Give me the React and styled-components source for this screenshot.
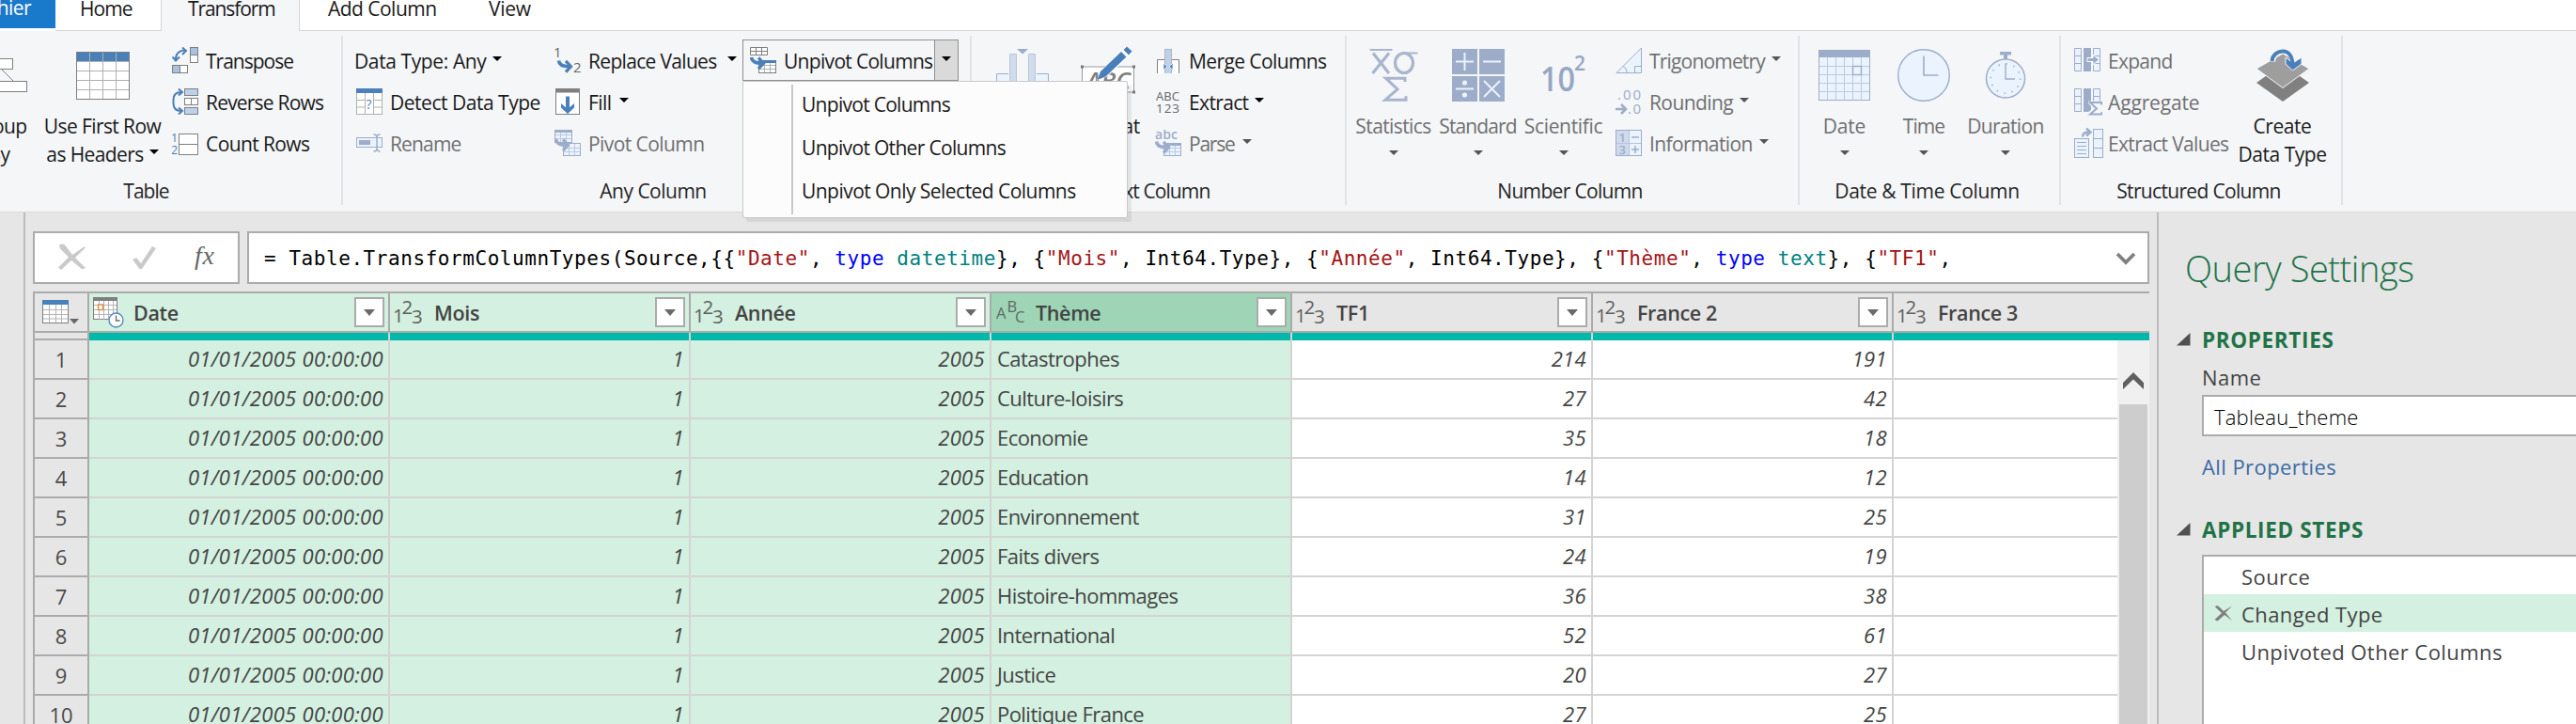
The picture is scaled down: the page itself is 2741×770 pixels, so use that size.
import React from "react";
import styled, { createGlobalStyle, css } from "styled-components";

const BLUE = "#4a80ba";
const MUTED = "#9dadc9";
const PALE = "#eaf3fe";
const GRAY = "#7f7f7f";
const RIBBON = "#f4f6f8";

const GlobalStyle = createGlobalStyle`
  * { box-sizing: border-box; }
  html, body { margin: 0; height: 100%; overflow: hidden; }
  body {
    background: #e6e6e6;
    color: #1a1a1a;
    font-family: "Open Sans", "Noto Sans", sans-serif;
    font-size: 21px;
  }
  svg { display: block; flex: none; }
`;

const Window = styled.div`
  width: 2741px;
  height: 770px;
  display: flex;
  flex-direction: column;
  overflow: hidden;
`;

/* ---------- tab strip ---------- */

const TabStrip = styled.div`
  flex: none;
  height: 33px;
  display: flex;
  align-items: flex-start;
  background: #fff;
  line-height: 19px;
  white-space: nowrap;
`;

const FileTab = styled.div`
  width: 59px;
  height: 30px;
  display: flex;
  justify-content: flex-end;
  padding-right: 26px;
  background: #1979ca;
  color: #fff;
  line-height: 16px;
  letter-spacing: -0.6px;
`;

const Tab = styled.div`
  width: ${(p) => p.$w}px;
  height: 33px;
  padding-left: ${(p) => p.$pad}px;
  letter-spacing: ${(p) => p.$ls}px;
  border-bottom: 1px solid #d3d5d8;
  ${(p) =>
    p.$active &&
    css`
      background: ${RIBBON};
      border: solid #d3d5d8;
      border-width: 0 1px;
    `}
`;

const TabRest = styled.div`
  flex: 1;
  height: 33px;
  border-bottom: 1px solid #d3d5d8;
`;

/* ---------- ribbon ---------- */

const Ribbon = styled.div`
  flex: none;
  height: 193px;
  display: flex;
  padding-top: 5px;
  background: ${RIBBON};
  border-bottom: 1px solid #d9dadc;
  white-space: nowrap;
`;

const Group = styled.section`
  flex: none;
  width: ${(p) => p.$w}px;
  height: 180px;
  padding-top: 5px;
  border-right: 2px solid #e1e3e6;
  display: flex;
  flex-direction: column;
`;

const GroupBody = styled.div`
  display: flex;
  height: 147px;
`;

const Caption = styled.div`
  padding-right: ${(p) => p.$shift ?? 5}px;
  text-align: center;
  line-height: 30px;
  letter-spacing: ${(p) => p.$ls ?? -0.6}px;
  color: #262626;
`;

const CommandColumn = styled.div`
  flex: none;
  width: ${(p) => (p.$w ? p.$w + "px" : "auto")};
  margin-left: ${(p) => p.$ml || 0}px;
`;

const CommandRow = styled.div`
  height: 44px;
  display: flex;
  align-items: center;
  margin-left: ${(p) => (p.$bare ? -2 : 0)}px;
  color: ${(p) => (p.$off ? "#707070" : "#1a1a1a")};
  letter-spacing: ${(p) => p.$ls ?? -0.6}px;
`;

const IconSlot = styled.span`
  flex: none;
  width: 36px;
  padding-bottom: 2px;
`;

const Arrow = styled.span`
  flex: none;
  width: 0;
  height: 0;
  margin-left: ${(p) => p.$gap ?? 7}px;
  margin-bottom: ${(p) => p.$up ?? 5}px;
  border: solid transparent;
  border-width: 5.5px 5.5px 0;
  border-top-color: ${(p) => (p.$off ? "#555" : "#000")};
`;

const BigButton = styled.div`
  flex: none;
  width: ${(p) => p.$w}px;
  margin-left: ${(p) => p.$ml || 0}px;
  display: flex;
  flex-direction: column;
  align-items: center;
  color: ${(p) => (p.$off ? "#707070" : "#1a1a1a")};
  letter-spacing: ${(p) => p.$ls ?? -0.6}px;
`;

const BigIcon = styled.div`
  height: 76px;
  padding-bottom: 2px;
  display: flex;
  align-items: center;
`;

const BigLine = styled.div`
  height: 30px;
  display: flex;
  align-items: center;
`;

const SplitButtonAnchor = styled.div`
  position: relative;
  width: 230px;
  margin-top: -1px;
`;

const SplitButton = styled.div`
  height: 44px;
  display: flex;
  border: 1px solid #8f8f8f;
  letter-spacing: -0.69px;
`;

const SplitMain = styled.div`
  flex: 1;
  display: flex;
  align-items: center;
  padding: 2px 0 0 7px;
`;

const SplitToggle = styled.div`
  width: 25px;
  display: flex;
  align-items: center;
  justify-content: center;
  background: #dadada;
  border-left: 1px solid #8f8f8f;
`;

const Menu = styled.div`
  position: absolute;
  z-index: 2;
  top: 44px;
  left: 0;
  width: 410px;
  height: 146px;
  padding-left: 51px;
  background: #fcfcfc;
  border: 1px solid #c8c8c8;
  border-radius: 2px;
  box-shadow: 4px 4px 1px rgba(0, 0, 0, 0.07);
`;

const MenuList = styled.div`
  height: 138px;
  margin-top: 3px;
  padding-left: 9px;
  border-left: 2px solid #c9c9c9;
`;

const MenuItem = styled.div`
  height: 46px;
  line-height: 43px;
  letter-spacing: ${(p) => p.$ls}px;
`;

/* ---------- workspace ---------- */

const Workspace = styled.div`
  flex: 1;
  min-height: 0;
  display: flex;
`;

const QueriesRail = styled.div`
  flex: none;
  width: 27px;
  border-right: 2px solid #bcbcbc;
`;

const Main = styled.main`
  flex: none;
  width: 2268px;
  padding: 20px 8px 0;
  display: flex;
  flex-direction: column;
`;

const FormulaBar = styled.div`
  flex: none;
  height: 56px;
  display: flex;
  gap: 8px;
`;

const FormulaTools = styled.div`
  flex: none;
  width: 220px;
  border: 2px solid #ababab;
  background: #fff;
`;

const FormulaInput = styled.div`
  flex: 1;
  display: flex;
  align-items: center;
  justify-content: space-between;
  padding: 1px 12px 0 16px;
  border: 2px solid #ababab;
  background: #fff;
`;

const Code = styled.code`
  font-family: "DejaVu Sans Mono", monospace;
  font-size: 21px;
  letter-spacing: 0.56px;
  white-space: pre;
  color: #000;
`;

const Token = styled.span`
  color: ${(p) => ({ str: "#a31515", kw: "#0000ff", type: "#008080" })[p.$kind]};
`;

const Grid = styled.div`
  flex: 1;
  min-height: 0;
  margin-top: 8px;
  border-top: 2px solid #ababab;
  display: flex;
  flex-direction: column;
  color: #444;
`;

const HeaderRow = styled.div`
  flex: none;
  height: 42px;
  display: flex;
  overflow: hidden;
  border-bottom: 2px solid #ababab;
`;

const CornerCell = styled.div`
  flex: none;
  width: 60px;
  height: ${(p) => p.$h}px;
  display: flex;
  align-items: center;
  justify-content: center;
  border: solid #ababab;
  border-width: 0 2px ${(p) => (p.$line ? 2 : 0)}px;
  font-size: 22px;
  color: #4a4a4a;
`;

const HeaderCell = styled.div`
  flex: none;
  width: 320px;
  height: 40px;
  display: flex;
  align-items: center;
  padding: 0 4px;
  border-right: 2px solid #ababab;
  background: ${(p) => ({ sel: "#d3f0e0", cur: "#9ed5b7" })[p.$tone] || "#e6e6e6"};
  font-size: 21.5px;
  font-weight: 600;
  letter-spacing: -0.35px;
`;

const HeaderIcon = styled.span`
  flex: none;
  width: 43px;
`;

const FilterButton = styled.span`
  flex: none;
  width: 32px;
  height: 32px;
  margin-left: auto;
  display: flex;
  align-items: center;
  justify-content: center;
  background: #fff;
  border: 2px solid #ababab;
`;

const FilterArrow = styled.span`
  border: solid transparent;
  border-width: 7px 6px 0;
  border-top-color: #6a6a6a;
`;

const QualityRow = styled.div`
  flex: none;
  height: 8px;
  display: flex;
  overflow: hidden;
`;

const QualityCell = styled.div`
  flex: none;
  width: 320px;
  background: #01b8aa;
  border-right: 2px solid #d4d4d4;
`;

const GridBody = styled.div`
  flex: 1;
  min-height: 0;
  display: flex;
`;

const Rows = styled.div`
  flex: 1;
  overflow: hidden;
`;

const Row = styled.div`
  display: flex;
  height: 42px;
`;

const Cell = styled.div`
  flex: none;
  width: 320px;
  padding: 0 5px 0 6px;
  border: solid #d4d4d4;
  border-width: 0 2px 2px 0;
  background: ${(p) => (p.$sel ? "#d3f0e0" : "#fff")};
  font-size: 22px;
  line-height: 39px;
  white-space: nowrap;
  ${(p) =>
    p.$num
      ? css`
          text-align: right;
          font-style: italic;
          letter-spacing: 0.33px;
        `
      : css`
          letter-spacing: -0.55px;
        `}
`;

const ScrollBar = styled.div`
  flex: none;
  width: 34px;
  display: flex;
  flex-direction: column;
  align-items: center;
  background: #f0f0f0;
`;

const ScrollUp = styled.div`
  height: 68px;
  padding-top: 33px;
`;

const ScrollThumb = styled.div`
  flex: 1;
  width: 30px;
  background: #cdcdcd;
`;

/* ---------- settings pane ---------- */

const Pane = styled.aside`
  flex: 1;
  min-width: 0;
  overflow: hidden;
  border-left: 2px solid #bcbcbc;
  padding-left: 19px;
  font-size: 22px;
  letter-spacing: 0.42px;
  color: #444;
  white-space: nowrap;
`;

const PaneTitle = styled.h1`
  margin: 0 0 0 9px;
  padding-top: 31px;
  font-size: 38px;
  font-weight: 300;
  line-height: 56px;
  letter-spacing: -0.46px;
  color: #217346;
`;

const SectionHead = styled.h2`
  margin: ${(p) => p.$mt}px 0 0;
  height: 30px;
  display: flex;
  align-items: center;
  gap: 11px;
  font-size: 22.5px;
  font-weight: 700;
  letter-spacing: 0.65px;
  color: #217346;
`;

const Field = styled.div`
  margin-left: 27px;
  display: flex;
  flex-direction: column;
`;

const FieldLabel = styled.label`
  margin-top: 8px;
  line-height: 34px;
`;

const NameInput = styled.div`
  width: 420px;
  height: 44px;
  margin-top: 2px;
  padding-left: 11px;
  border: 2px solid #ababab;
  background: #fff;
  color: #000;
  font-weight: 300;
  letter-spacing: 0.2px;
  line-height: 42px;
`;

const Link = styled.a`
  margin-top: 16px;
  line-height: 32px;
  color: #3b6aa5;
`;

const StepList = styled.div`
  width: 420px;
  height: 240px;
  margin: 12px 0 0 27px;
  border: 2px solid #ababab;
  background: #fff;
`;

const Step = styled.div`
  height: 40px;
  display: flex;
  align-items: center;
  padding-top: 2px;
  background: ${(p) => (p.$sel ? "#d3f0e0" : "transparent")};
`;

const StepIcon = styled.span`
  flex: none;
  width: 40px;
  padding: 0 0 2px 11px;
`;

/* ---------- small icons (28 x 28) ---------- */

const Icon = ({ children, w = 28, h = 28 }) => (
  <svg width={w} height={h} viewBox={`0 0 ${w} ${h}`} fill="none">
    {children}
  </svg>
);

const Curl = ({ x, y, c }) => (
  <g transform={`translate(${x} ${y})`} stroke={c}>
    <path d="M0 .5c.5 4.500 4 6.300 11 6.200" strokeWidth="3.600" />
    <path d="M7.500 .8l5.500 5.900-5.500 5.900" strokeWidth="3.200" />
  </g>
);

const MiniTable = ({ x, y, c, head, fill = "#fff", line = c }) => (
  <g transform={`translate(${x} ${y})`}>
    <rect x=".5" y=".5" width="18" height="13" fill={fill} stroke={c} />
    <path d="M6.500 1v12M12.500 1v12M1 5.500h17M1 9.500h17" stroke={line} />
    {head && <rect width="19" height="3" fill={head} />}
  </g>
);

const TransposeIcon = () => (
  <Icon>
    <rect x="19.500" y=".5" width="8" height="16" fill="#fff" stroke={GRAY} />
    <path d="M20 1h7v7h-7z" fill="#a9c1de" />
    <path d="M20 8.500h7" stroke={GRAY} />
    <rect x=".5" y="19.500" width="16" height="8" fill="#fff" stroke={GRAY} />
    <path d="M1 20h7v7H1z" fill="#a9c1de" />
    <path d="M8.500 20v7" stroke={GRAY} />
    <path d="M4 13C4 7 8 3.500 14 3.500" stroke={BLUE} strokeWidth="2" />
    <path d="M11 .5l4 3.500-4 4M.5 10.500l3.500 4 4-4" stroke={BLUE} strokeWidth="2" />
  </Icon>
);

const ReverseIcon = () => (
  <Icon>
    <rect x="13.500" y=".5" width="14" height="7" fill="#bed1ea" stroke={GRAY} />
    <rect x="13.500" y="10.500" width="14" height="7" fill="#fff" stroke={GRAY} />
    <path d="M20.500 11v6" stroke={GRAY} />
    <rect x="13.500" y="20.500" width="14" height="7" fill="#bed1ea" stroke={GRAY} />
    <path d="M10 4C4 4 1.500 7 1.500 12v4c0 5 2.500 8 8.500 8" stroke={BLUE} strokeWidth="2" />
    <path d="M7 .5l4 3.500-4 3.500M7 20.500l4 3.500-4 3.500" stroke={BLUE} strokeWidth="2" />
  </Icon>
);

const CountIcon = () => (
  <Icon>
    <rect x="7.500" y="4.500" width="20" height="22" fill="#fff" stroke={GRAY} />
    <path d="M8 15.500h19" stroke={GRAY} />
    <text x="-1" y="13" fontSize="12.500" fill={BLUE} letterSpacing="0">1</text>
    <text x="-1" y="26" fontSize="12.500" fill={BLUE} letterSpacing="0">2</text>
  </Icon>
);

const DetectIcon = () => (
  <Icon>
    <rect x=".5" y=".5" width="27" height="27" fill="#fff" stroke="#b0b0b0" />
    <path d="M9.500 5v22M18.500 5v22M1 12.500h8M1 20h8M19 12.500h8M19 20h8" stroke="#b0b0b0" />
    <path d="M0 0h28v5H0z" fill={BLUE} />
    <text x="10.500" y="22" fontSize="14" fill={BLUE} letterSpacing="0">?</text>
  </Icon>
);

const RenameIcon = () => (
  <Icon w={28} h={20}>
    <rect x=".5" y="4.500" width="27" height="10" fill={PALE} stroke={MUTED} />
    <path d="M3 7h12v5H3z" fill={MUTED} />
    <path d="M18.500 1c3 0 3.500 1.500 3.500 3v12c0 1.500-.5 3-3.500 3M25.500 1c-3 0-3.500 1.500-3.500 3v12c0 1.500.5 3 3.500 3" stroke={MUTED} strokeWidth="1.500" />
  </Icon>
);

const ReplaceIcon = () => (
  <Icon w={31}>
    <text x="-1" y="11" fontSize="15" fill="#666" letterSpacing="0">1</text>
    <Curl x={4.500} y={14} c={BLUE} />
    <text x="20" y="26.500" fontSize="15" fill="#666" letterSpacing="0">2</text>
  </Icon>
);

const FillIcon = () => (
  <Icon h={30}>
    <rect x="1.500" y="1.500" width="25" height="27" fill="#fff" stroke={GRAY} />
    <path d="M1 1h26v4.500H1z" fill={GRAY} />
    <path d="M14 9.500V25" stroke={BLUE} strokeWidth="4" />
    <path d="M7 17v4.500L14 28l7-6.500V17l-7 6z" fill={BLUE} />
  </Icon>
);

const PivotIcon = () => (
  <Icon>
    <MiniTable x={0} y={0} c={MUTED} head={MUTED} fill={PALE} line="#bccadf" />
    <MiniTable x={9} y={14} c={MUTED} fill={PALE} line="#bccadf" />
    <Curl x={1.500} y={9.500} c={MUTED} />
  </Icon>
);

const UnpivotIcon = () => (
  <Icon>
    <path d="M.5.500h18v8H.5zM6.500 1v7M12.500 1v7M1 4.500h17" fill="#fff" stroke={GRAY} />
    <MiniTable x={9} y={14} c={GRAY} head={BLUE} line="#b0b0b0" />
    <Curl x={1.500} y={10.500} c={BLUE} />
  </Icon>
);

const MergeIcon = () => (
  <Icon>
    <path d="M2.500 28V13.500h23V28" fill="#fff" stroke={GRAY} />
    <rect x="10.500" y="2.500" width="7" height="26" fill="#bed1ea" stroke="#a9b5c6" />
    <path d="M9 17l4 3.800-4 3.800zM19 17l-4 3.800 4 3.800z" fill={BLUE} stroke="#fff" strokeWidth=".8" />
  </Icon>
);

const ExtractIcon = () => (
  <Icon>
    <text x="1" y="13" fontSize="13" textLength="25" fill="#666" letterSpacing="0">ABC</text>
    <text x="1" y="26" fontSize="13.500" textLength="25" fill="#666" letterSpacing="0">123</text>
  </Icon>
);

const ParseIcon = () => (
  <Icon w={29}>
    <text x="0" y="10" fontSize="14" textLength="24" fontWeight="600" fill={MUTED} letterSpacing="0">abc</text>
    <MiniTable x={9} y={14} c={MUTED} head={MUTED} fill={PALE} line="#bccadf" />
    <Curl x={1.500} y={12} c={MUTED} />
  </Icon>
);

const TrigIcon = () => (
  <Icon>
    <path d="M1 27.500L27.500 1v26.500z" fill={PALE} stroke={MUTED} />
    <path d="M20.500 27v-6.500H27M8 20.500c3 1.500 4 4 4 6.500" stroke={MUTED} />
  </Icon>
);

const RoundIcon = () => (
  <Icon>
    <text x="2" y="12" fontSize="15" textLength="25" fill={MUTED} letterSpacing="0">.00</text>
    <text x="13" y="27" fontSize="15" textLength="14" fill={MUTED} letterSpacing="0">.0</text>
    <path d="M0 22h10M6 17l5 5-5 5" stroke={MUTED} strokeWidth="2.600" />
  </Icon>
);

const InfoIcon = () => (
  <Icon>
    <rect x=".5" y=".5" width="27" height="27" fill={PALE} stroke={MUTED} />
    <path d="M1 1h13v26H1z" fill="#cfdbed" />
    <path d="M14.500 1v26M1 14.500h26" stroke="#b6c5dc" />
    <text x="3.500" y="12.500" fontSize="13" fill={MUTED} fontWeight="600" letterSpacing="0">1</text>
    <text x="3.500" y="26" fontSize="13" fill={MUTED} fontWeight="600" letterSpacing="0">3</text>
    <path d="M17 8h8M17 21h8M21 17v8" stroke={MUTED} strokeWidth="1.500" />
  </Icon>
);

const Columns = ({ children }) => (
  <>
    <path d="M.5.5h7v24h-7zM20.500.5h7v24h-7z" fill={PALE} stroke={MUTED} />
    <path d="M1 8.500h6M1 16.500h6M21 8.500h6M21 16.500h6" stroke={MUTED} />
    <path d="M10 0h8v25h-8z" fill={MUTED} />
    {children}
  </>
);

const ExpandIcon = () => (
  <Icon h={26}>
    <Columns>
      <path d="M14 10.500h6V7l6.500 5.500L20 18v-3.500h-6z" fill={MUTED} stroke="#fff" />
    </Columns>
  </Icon>
);

const AggregateIcon = () => (
  <Icon w={30} h={29}>
    <Columns>
      <path d="M15 13.500h15v15H14.500v-3l6-4.500-5.500-5z" fill={RIBBON} />
      <path d="M29 17.500v-2.500H17l7 6.500-7 6h12.500v-2.500" stroke={MUTED} strokeWidth="2" />
    </Columns>
  </Icon>
);

const ExtractValuesIcon = () => (
  <Icon w={32} h={32}>
    <g transform="translate(-1 0)">
      <rect x="1.500" y="11.500" width="15" height="20" fill={PALE} stroke={MUTED} />
      <path d="M4 15.500h10M4 19.500h10M4 23.500h10M4 27.500h10" stroke={MUTED} />
      <rect x="21.500" y="1.500" width="10" height="30" fill={PALE} stroke={MUTED} />
      <path d="M22 11.500h9M22 21.500h9" stroke={MUTED} />
      <path d="M10 9.500c0-3.500 2-5 7-5M14 .5l4.500 4-4.500 4" stroke={MUTED} strokeWidth="2.400" />
    </g>
  </Icon>
);

/* ---------- large icons ---------- */

const GroupByIcon = () => (
  <Icon w={60} h={56}>
    <path d="M33 22l12 12M26 22L14 34" stroke={GRAY} />
    <rect x="14.500" y="10.500" width="30" height="11" fill="#fff" stroke={GRAY} />
    <rect x=".5" y="34.500" width="59" height="11" fill="#fff" stroke={GRAY} />
  </Icon>
);

const TableIcon = () => (
  <Icon w={57} h={51}>
    <rect x=".5" y=".5" width="56" height="50" fill="#fff" stroke={GRAY} />
    <path d="M1 1h55v10H1z" fill={BLUE} />
    <path d="M14.500 1v49M28.500 1v49M42.500 1v49M1 10.500h55M1 20.500h55M1 30.500h55M1 40.500h55" stroke="#b0b0b0" />
  </Icon>
);

const SplitIcon = () => (
  <Icon w={56} h={56}>
    <path d="M.5 26.500h55V56H.5z" fill={PALE} stroke={MUTED} />
    <path d="M13 5h30v51H13z" fill={RIBBON} />
    <path d="M14.500 56V5.500h7V56M34.500 56V5.500h7V56" fill="#d0dcec" stroke="#b9c7dd" />
    <path d="M22 0h12l-6 5.500z" fill={MUTED} />
  </Icon>
);

const FormatIcon = () => (
  <Icon w={58} h={62}>
    <g transform="translate(0 -.5)">
      <rect x="1.500" y="22.500" width="55" height="27" fill="#fff" stroke="#999" />
      <path d="M0 21h3v3H0zM55 21h3v3h-3zM55 48h3v3h-3z" fill="#777" />
      <text x="6" y="46" fontSize="26" fontStyle="italic" fontWeight="600" fill={GRAY} letterSpacing="0">ABC</text>
      <path d="M17 37l4-10L47 1l8 7-27 25z" fill="#fff" />
      <path d="M17.500 36.500l3.500-9 22-21 5.500 5.500-22 21z" fill={BLUE} />
      <path d="M45.500 4.500L49 1l5.500 5-3.500 4z" fill={BLUE} />
    </g>
  </Icon>
);

const StatisticsIcon = () => (
  <Icon w={52} h={56}>
    <path d="M.5 1h24M36 4.500h15.500" stroke="#a8b5cd" strokeWidth="2.200" />
    <path d="M4 4.500l17 21.500M21 4.500L3.500 26" stroke="#a8b5cd" strokeWidth="3.200" />
    <ellipse cx="37" cy="15" rx="9.500" ry="10.500" stroke="#a8b5cd" strokeWidth="3.200" />
    <path d="M38 35v-3.800H17.500L30 43 17 54.200h22v-4" stroke="#a8b5cd" strokeWidth="3" />
  </Icon>
);

const StandardIcon = () => (
  <Icon w={56} h={56}>
    <path d="M0 0h27v27H0zM29 0h27v27H29zM0 29h27v27H0zM29 29h27v27H29z" fill={MUTED} />
    <path d="M4 13.500h19M13.500 4v19M33 13.500h19M4 42.500h19M34 34l17 17M51 34L34 51" stroke={PALE} strokeWidth="2" />
    <circle cx="13.500" cy="36" r="2.600" fill={PALE} />
    <circle cx="13.500" cy="49" r="2.600" fill={PALE} />
  </Icon>
);

const ScientificIcon = () => (
  <Icon w={48} h={42}>
    <text x="-1" y="38" fontSize="36" textLength="37" lengthAdjust="spacingAndGlyphs" fontWeight="600" fill="#96a7c4" letterSpacing="0">10</text>
    <text x="35" y="16" fontSize="21" fontWeight="600" fill="#96a7c4" letterSpacing="0">2</text>
  </Icon>
);

const CalendarIcon = () => (
  <Icon w={56} h={54}>
    <rect x=".5" y=".5" width="54" height="53" fill={PALE} stroke={MUTED} />
    <path d="M0 0h55v8H0z" fill={MUTED} />
    <path d="M9.500 8v45M18.500 8v45M27.500 8v45M36.500 8v45M45.500 8v45M1 17.500h53M1 26.500h53M1 35.500h53M1 44.500h53" stroke="#bccadf" />
    <rect x="36.500" y="17.500" width="9" height="9" stroke={MUTED} strokeWidth="1.400" fill={PALE} />
  </Icon>
);

const ClockIcon = () => (
  <Icon w={56} h={56}>
    <circle cx="28" cy="28" r="27.300" fill={PALE} stroke={MUTED} strokeWidth="1.400" />
    <path d="M28 7.500V28h15.500" stroke={MUTED} strokeWidth="1.600" />
  </Icon>
);

const StopwatchIcon = () => (
  <Icon w={44} h={50}>
    <path d="M16 1.500h12M22 1v7" stroke={MUTED} strokeWidth="4" />
    <circle cx="22" cy="28.500" r="20.500" fill={PALE} stroke={MUTED} strokeWidth="1.500" />
    <path d="M22 12.500v16.500h10" stroke={MUTED} strokeWidth="1.400" />
    <circle cx="22" cy="28.500" r="15.700" stroke={MUTED} strokeWidth="1.500" strokeDasharray="1.500 6.720" />
  </Icon>
);

const CreateTypeIcon = () => (
  <Icon w={56} h={56}>
    <path d="M28 16l28 20-28 20L0 36z" fill="#808080" />
    <path d="M28 5l28 16-28 20.500L0 21z" fill="#9e9e9e" stroke={RIBBON} />
    <path d="M16.500 13.500C17 6 23 2 29 2s10 4 10 11" stroke={RIBBON} strokeWidth="7" />
    <path d="M31 9l8 6 9-6v7l-9.500 7L31 16z" fill={BLUE} stroke={RIBBON} />
    <path d="M16.500 13C17 6 23 2.500 28 2.500S38.500 6 38.500 18" stroke={BLUE} strokeWidth="4" />
  </Icon>
);

/* ---------- grid icons ---------- */

const Number123 = () => (
  <svg width="36" height="34" viewBox="0 0 36 34" fill="#606060" fontSize="20.500" fontWeight="400">
    <text x="-1" y="27.500">1</text>
    <text x="8.500" y="19">2</text>
    <text x="19" y="29">3</text>
  </svg>
);

const TextABC = () => (
  <svg width="36" height="34" viewBox="0 0 36 34" fill="#5d6b64" fontSize="16.500" fontWeight="400">
    <text x="1" y="23.500">A</text>
    <text x="12.500" y="16.500">B</text>
    <text x="21" y="28">C</text>
  </svg>
);

const DateTimeIcon = () => (
  <svg width="34" height="34" viewBox="0 0 34 34" fill="none">
    <rect x=".5" y="1.500" width="25" height="23" fill="#fff" stroke={GRAY} />
    <path d="M6.500 4v21M11.500 4v21M16.500 4v21M21.500 4v21M1 9.500h24M1 14.500h24M1 19.500h24" stroke="#b4b4b4" />
    <path d="M0 1h26v4H0z" fill={GRAY} />
    <rect x="5.500" y="9" width="5" height="5.500" fill="#fff" stroke="#e08a3c" strokeWidth="1.400" />
    <circle cx="24.500" cy="25.500" r="7.500" fill="#fff" stroke="#4f86c2" strokeWidth="1.300" />
    <path d="M24.500 20.500v5.500h4" stroke="#666" strokeWidth="1.300" />
  </svg>
);

const CornerIcon = () => (
  <svg width="40" height="28" viewBox="0 0 40 28" fill="none">
    <rect x=".5" y="1.500" width="27" height="24" fill="#fff" stroke={GRAY} />
    <path d="M7.500 6v19M14.500 6v19M20.500 6v19M1 11.500h26M1 16.500h26M1 21h26" stroke="#b4b4b4" />
    <path d="M0 1h28v5H0z" fill={BLUE} />
    <path d="M29 21h10l-5 5.500z" fill="#666" />
  </svg>
);

const FormulaIcons = () => (
  <svg width="216" height="52" viewBox="0 0 216 52" fill="none">
    <path d="M26 13c3-3 6-1 8 2l6 8 13-9 .8 1.500L43 26l11 11-3.500 1.500L39 29 28 39l-3-2.500 11-11-9-9z" fill="#cacaca" />
    <path d="M104 28l4-2 5 6 12-18 4 2-15 22h-2.500z" fill="#cacaca" />
    <text x="170" y="32.500" fontFamily="Liberation Serif, serif" fontStyle="italic" fontSize="28" textLength="21" fill="#666">fx</text>
  </svg>
);

const Chevron = () => (
  <svg width="22" height="14" viewBox="0 0 22 14" fill="none">
    <path d="M2 2l9 9 9-9" stroke="#808080" strokeWidth="3.800" />
  </svg>
);

const DeleteIcon = () => (
  <svg width="20" height="18" viewBox="0 0 20 18" fill="none">
    <path d="M1 2.500C2.500 0 5 1.500 6 3l4 4 9-5.500L12 8.500 19 17l-8-6-7.500 6.500L.5 16 8 9z" fill="#808080" />
  </svg>
);

const Twisty = () => (
  <svg width="16" height="14" viewBox="0 0 16 14">
    <path d="M14.500 0v13.500H0z" fill="#505050" />
  </svg>
);

/* ---------- composition ---------- */

const Command = ({ icon, label, off, ls, arrow, gap }) => (
  <CommandRow $off={off} $ls={ls} $bare={!icon}>
    {icon && <IconSlot>{icon}</IconSlot>}
    {label}
    {arrow && <Arrow $off={off} $gap={gap} />}
  </CommandRow>
);

const Big = ({ icon, lines = [], arrow, ...p }) => (
  <BigButton {...p}>
    <BigIcon>{icon}</BigIcon>
    {lines.map((t, i) => (
      <BigLine key={t}>
        {t}
        {arrow === "inline" && i === lines.length - 1 && <Arrow $up={5} $gap={6} />}
      </BigLine>
    ))}
    {arrow === "below" && (
      <BigLine>
        <Arrow $off $gap={0} $up={3} />
      </BigLine>
    )}
  </BigButton>
);

const themes = [
  ["Catastrophes", 214, 191],
  ["Culture-loisirs", 27, 42],
  ["Economie", 35, 18],
  ["Education", 14, 12],
  ["Environnement", 31, 25],
  ["Faits divers", 24, 19],
  ["Histoire-hommages", 36, 38],
  ["International", 52, 61],
  ["Justice", 20, 27],
  ["Politique France", 27, 25],
];

const columns = [
  { title: "Date", icon: <DateTimeIcon />, tone: "sel" },
  { title: "Mois", icon: <Number123 />, tone: "sel" },
  { title: "Année", icon: <Number123 />, tone: "sel" },
  { title: "Thème", icon: <TextABC />, tone: "cur" },
  { title: "TF1", icon: <Number123 /> },
  { title: "France 2", icon: <Number123 /> },
  { title: "France 3", icon: <Number123 /> },
];

const Str = ({ children }) => <Token $kind="str">"{children}"</Token>;
const Kw = () => <Token $kind="kw">type</Token>;

export default function App() {
  return (
    <Window>
      <GlobalStyle />
      <TabStrip>
        <FileTab>Fichier</FileTab>
        <Tab $w={112} $pad={26} $ls={-0.96}>Home</Tab>
        <Tab $w={148} $pad={28} $ls={-1.1} $active>Transform</Tab>
        <Tab $w={172} $pad={30} $ls={-0.53}>Add Column</Tab>
        <Tab $w={110} $pad={29} $ls={-0.3}>View</Tab>
        <TabRest />
      </TabStrip>

      <Ribbon>
        <Group $w={365}>
          <GroupBody>
            <Big $ml={-32} $w={62} icon={<GroupByIcon />} lines={["Group", "By"]} />
            <Big $ml={14} $w={130} icon={<TableIcon />} lines={["Use First Row", "as Headers"]} arrow="inline" />
            <CommandColumn $ml={9}>
              <Command icon={<TransposeIcon />} label="Transpose" ls={-1} />
              <Command icon={<ReverseIcon />} label="Reverse Rows" ls={-0.8} />
              <Command icon={<CountIcon />} label="Count Rows" />
            </CommandColumn>
          </GroupBody>
          <Caption $shift={52} $ls={-0.94}>Table</Caption>
        </Group>

        <Group $w={669}>
          <GroupBody>
            <CommandColumn $ml={14} $w={211}>
              <Command label="Data Type: Any" ls={-0.39} arrow />
              <Command icon={<DetectIcon />} label="Detect Data Type" ls={-0.48} />
              <Command icon={<RenameIcon />} label="Rename" ls={-0.84} off />
            </CommandColumn>
            <CommandColumn $w={200}>
              <Command icon={<ReplaceIcon />} label="Replace Values" ls={-0.68} arrow gap={11} />
              <Command icon={<FillIcon />} label="Fill" ls={-0.56} arrow gap={8} />
              <Command icon={<PivotIcon />} label="Pivot Column" ls={-0.57} off />
            </CommandColumn>
            <SplitButtonAnchor>
              <SplitButton>
                <SplitMain>
                  <IconSlot><UnpivotIcon /></IconSlot>
                  Unpivot Columns
                </SplitMain>
                <SplitToggle><Arrow $gap={0} $up={4} /></SplitToggle>
              </SplitButton>
              <Menu>
                <MenuList>
                  <MenuItem $ls={-0.72}>Unpivot Columns</MenuItem>
                  <MenuItem $ls={-0.68}>Unpivot Other Columns</MenuItem>
                  <MenuItem $ls={-0.54}>Unpivot Only Selected Columns</MenuItem>
                </MenuList>
              </Menu>
            </SplitButtonAnchor>
          </GroupBody>
          <Caption $shift={7} $ls={-0.5}>Any Column</Caption>
        </Group>

        <Group $w={399}>
          <GroupBody>
            <Big $ml={9} $w={90} icon={<SplitIcon />} />
            <Big $ml={0} $w={92} icon={<FormatIcon />} lines={["Format"]} />
            <CommandColumn $ml={4}>
              <Command icon={<MergeIcon />} label="Merge Columns" />
              <Command icon={<ExtractIcon />} label="Extract" ls={-0.64} arrow />
              <Command icon={<ParseIcon />} label="Parse" ls={-1.24} arrow gap={9} off />
            </CommandColumn>
          </GroupBody>
          <Caption $shift={4} $ls={-0.9}>Text Column</Caption>
        </Group>

        <Group $w={482}>
          <GroupBody>
            <Big $off $ml={5} $w={89} icon={<StatisticsIcon />} lines={["Statistics"]} arrow="below" />
            <Big $off $w={91} $ls={-0.88} icon={<StandardIcon />} lines={["Standard"]} arrow="below" />
            <Big $off $w={91} $ls={-0.33} icon={<ScientificIcon />} lines={["Scientific"]} arrow="below" />
            <CommandColumn $ml={10}>
              <Command icon={<TrigIcon />} label="Trigonometry" ls={-0.82} arrow off />
              <Command icon={<RoundIcon />} label="Rounding" ls={-0.6} arrow off />
              <Command icon={<InfoIcon />} label="Information" ls={-0.6} arrow off />
            </CommandColumn>
          </GroupBody>
          <Caption $ls={-0.67}>Number Column</Caption>
        </Group>

        <Group $w={278}>
          <GroupBody>
            <Big $off $ml={5} $w={85} $ls={-0.17} icon={<CalendarIcon />} lines={["Date"]} arrow="below" />
            <Big $off $w={84} $ls={-0.9} icon={<ClockIcon />} lines={["Time"]} arrow="below" />
            <Big $off $w={90} $ls={-0.65} icon={<StopwatchIcon />} lines={["Duration"]} arrow="below" />
          </GroupBody>
          <Caption $ls={-0.32}>Date &amp; Time Column</Caption>
        </Group>

        <Group $w={300}>
          <GroupBody>
            <CommandColumn $ml={14} $w={171}>
              <Command icon={<ExpandIcon />} label="Expand" ls={-0.73} off />
              <Command icon={<AggregateIcon />} label="Aggregate" ls={-0.15} off />
              <Command icon={<ExtractValuesIcon />} label="Extract Values" ls={-0.65} off />
            </CommandColumn>
            <Big $w={101} $ls={-0.46} icon={<CreateTypeIcon />} lines={["Create", "Data Type"]} />
          </GroupBody>
          <Caption $ls={-0.67}>Structured Column</Caption>
        </Group>
      </Ribbon>

      <Workspace>
        <QueriesRail />
        <Main>
          <FormulaBar>
            <FormulaTools>
              <FormulaIcons />
            </FormulaTools>
            <FormulaInput>
              <Code>
                = Table.TransformColumnTypes(Source,{"{{"}
                <Str>Date</Str>, <Kw /> <Token $kind="type">datetime</Token>
                {"}, {"}
                <Str>Mois</Str>
                {", Int64.Type}, {"}
                <Str>Année</Str>
                {", Int64.Type}, {"}
                <Str>Thème</Str>, <Kw /> <Token $kind="type">text</Token>
                {"}, {"}
                <Str>TF1</Str>,
              </Code>
              <Chevron />
            </FormulaInput>
          </FormulaBar>

          <Grid>
            <HeaderRow>
              <CornerCell $h={40}><CornerIcon /></CornerCell>
              {columns.map((c) => (
                <HeaderCell key={c.title} $tone={c.tone}>
                  <HeaderIcon>{c.icon}</HeaderIcon>
                  {c.title}
                  <FilterButton><FilterArrow /></FilterButton>
                </HeaderCell>
              ))}
            </HeaderRow>
            <QualityRow>
              <CornerCell $h={8} $line />
              {columns.map((c) => (
                <QualityCell key={c.title} />
              ))}
            </QualityRow>
            <GridBody>
              <Rows>
                {themes.map(([name, tf1, fr2], i) => (
                  <Row key={name}>
                    <CornerCell $h={42} $line>{i + 1}</CornerCell>
                    <Cell $sel $num>01/01/2005 00:00:00</Cell>
                    <Cell $sel $num>1</Cell>
                    <Cell $sel $num>2005</Cell>
                    <Cell $sel>{name}</Cell>
                    <Cell $num>{tf1}</Cell>
                    <Cell $num>{fr2}</Cell>
                    <Cell />
                  </Row>
                ))}
              </Rows>
              <ScrollBar>
                <ScrollUp>
                  <svg width="22" height="20" viewBox="0 0 22 20">
                    <path d="M11 1l11 11V19L11 8.500 0 19v-7z" fill="#606060" />
                  </svg>
                </ScrollUp>
                <ScrollThumb />
              </ScrollBar>
            </GridBody>
          </Grid>
        </Main>

        <Pane>
          <PaneTitle>Query Settings</PaneTitle>
          <SectionHead $mt={33}><Twisty />PROPERTIES</SectionHead>
          <Field>
            <FieldLabel>Name</FieldLabel>
            <NameInput>Tableau_theme</NameInput>
            <Link>All Properties</Link>
          </Field>
          <SectionHead $mt={36}><Twisty />APPLIED STEPS</SectionHead>
          <StepList>
            {["Source", "Changed Type", "Unpivoted Other Columns"].map((s, i) => (
              <Step key={s} $sel={i === 1}>
                <StepIcon>{i === 1 && <DeleteIcon />}</StepIcon>
                {s}
              </Step>
            ))}
          </StepList>
        </Pane>
      </Workspace>
    </Window>
  );
}
